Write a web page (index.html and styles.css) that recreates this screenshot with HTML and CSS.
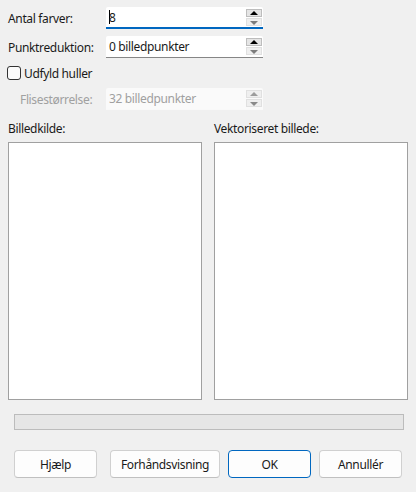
FILE: index.html
```html
<!DOCTYPE html>
<html lang="da">
<head>
<meta charset="utf-8">
<link rel="stylesheet" href="styles.css">
</head>
<body>
<div class="dialog">
  <div class="row r1">
    <span class="label">Antal farver:</span>
    <div class="field focused">
      <div class="text"><span class="caret"></span>8</div>
      <div class="spin"><span class="up"></span><span class="down"></span></div>
    </div>
  </div>
  <div class="row r2">
    <span class="label">Punktreduktion:</span>
    <div class="field">
      <div class="text">0 billedpunkter</div>
      <div class="spin"><span class="up"></span><span class="down"></span></div>
    </div>
  </div>
  <label class="check">
    <span class="box"></span>
    <span>Udfyld huller</span>
  </label>
  <div class="row r4 disabled">
    <span class="label indent">Flisestørrelse:</span>
    <div class="field">
      <div class="text">32 billedpunkter</div>
      <div class="spin"><span class="up"></span><span class="down"></span></div>
    </div>
  </div>
  <div class="panes">
    <div class="pane">
      <div class="pane-label">Billedkilde:</div>
      <div class="pane-box"></div>
    </div>
    <div class="pane">
      <div class="pane-label">Vektoriseret billede:</div>
      <div class="pane-box"></div>
    </div>
  </div>
  <div class="progress"></div>
  <div class="buttons">
    <button class="btn b-help">Hjælp</button>
    <button class="btn b-prev">Forhåndsvisning</button>
    <button class="btn b-ok">OK</button>
    <button class="btn b-cancel">Annullér</button>
  </div>
</div>
</body>
</html>
```

FILE: styles.css
```css
html, body {
  margin: 0;
  padding: 0;
  background: #f0f0f0;
}
.dialog {
  width: 416px;
  height: 492px;
  box-sizing: border-box;
  padding: 7px 8px 0 8px;
  font-family: "Noto Sans", sans-serif;
  font-size: 12px;
  letter-spacing: -0.35px;
  color: #1a1a1a;
  display: flex;
  flex-direction: column;
}
.row {
  display: flex;
  align-items: center;
  height: 22px;
}
.r2 { margin-top: 7px; }
.r4 { margin-top: 7px; }
.label {
  width: 98px;
  flex: none;
}
.label.indent { padding-left: 12px; box-sizing: border-box; }
.field {
  width: 157px;
  height: 22px;
  box-sizing: border-box;
  background: #fff;
  display: flex;
  border-bottom: 1px solid #868686;
  border-radius: 2px 2px 0 0;
}
.field.focused { border-bottom: 2px solid #0067c0; }
.disabled .field { border-bottom: 1px solid #f9f9f9; background: #fafafa; }
.disabled { color: #a0a0a0; }
.text {
  flex: 1;
  display: flex;
  align-items: center;
  padding-left: 3px;
}
.caret {
  display: inline-block;
  width: 1px;
  height: 14px;
  background: #000;
  margin-right: -1px;
}
.spin {
  width: 16px;
  margin-right: 1px;
  display: flex;
  flex-direction: column;
  padding-top: 2px;
  gap: 1px;
}
.spin span {
  height: 8px;
  box-sizing: border-box;
  position: relative;
  background: #e5e5e5;
  border: 1px solid #bdbdbd;
}
.spin .down {
  background: #efefef;
  border-color: #e0e0e0;
}
.spin span::after {
  content: "";
  position: absolute;
  left: 3px;
  top: 1px;
  border-left: 4px solid transparent;
  border-right: 4px solid transparent;
}
.spin .up::after {
  border-bottom: 4px solid #000;
}
.spin .down::after {
  top: 2px;
  border-top: 4px solid #7c7c7c;
}
.disabled .spin .up { border-color: #e0e0e0; background: #efefef; }
.disabled .spin .up::after { border-bottom-color: #9c9c9c; }
.disabled .spin .down::after { border-top-color: #8a8a8a; }
.check {
  display: flex;
  align-items: center;
  margin-top: 7px;
  height: 16px;
  margin-left: -1px;
}
.check .box {
  width: 14px;
  height: 14px;
  box-sizing: border-box;
  border: 1px solid #333;
  border-radius: 3px;
  background: #fbfbfb;
  margin-right: 3px;
}
.panes {
  display: flex;
  gap: 12px;
  margin-top: 11px;
}
.pane {
  width: 194px;
  display: flex;
  flex-direction: column;
}
.pane-label {
  height: 16px;
  line-height: 16px;
  margin-bottom: 5px;
}
.pane-box {
  height: 258px;
  box-sizing: border-box;
  background: #fff;
  border: 1px solid #a0a0a0;
}
.progress {
  margin: 14px 4px 0 6px;
  height: 16px;
  box-sizing: border-box;
  background: #e6e6e6;
  border: 1px solid #bcbcbc;
}
.buttons {
  display: flex;
  margin-top: 20px;
  padding-left: 6px;
}
.btn {
  height: 28px;
  box-sizing: border-box;
  background: #fdfdfd;
  border: 1px solid #d0d0d0;
  border-bottom-color: #c0c0c0;
  border-radius: 4px;
  font-family: inherit;
  font-size: 12px;
  letter-spacing: inherit;
  color: #1a1a1a;
  padding: 0;
}
.b-help { width: 83px; }
.b-prev { width: 110px; margin-left: 13px; }
.b-ok { width: 83px; margin-left: 8px; border: 1px solid #0067c0; }
.b-cancel { width: 83px; margin-left: 8px; }
```
